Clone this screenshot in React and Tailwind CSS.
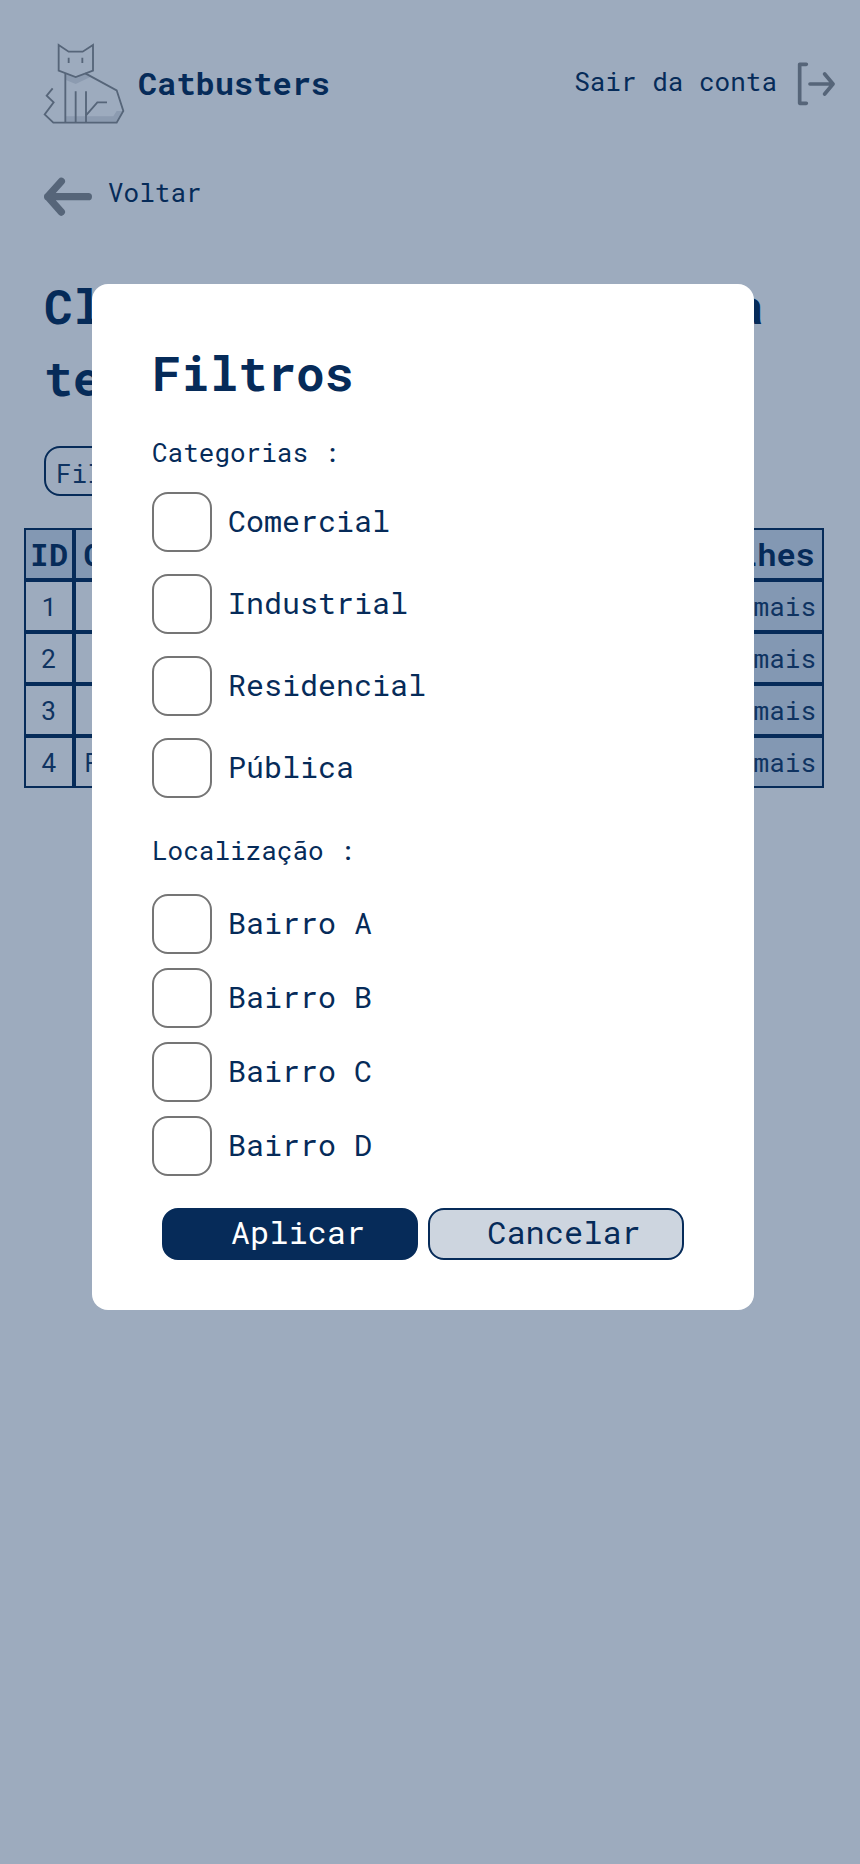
import React from "react";

const categories = ["Comercial", "Industrial", "Residencial", "Pública"];
const places = ["Bairro A", "Bairro B", "Bairro C", "Bairro D"];
const rows = [
  { id: 1, category: "Comercial", place: "Bairro A" },
  { id: 2, category: "Industrial", place: "Bairro B" },
  { id: 3, category: "Comercial", place: "Bairro C" },
  { id: 4, category: "Residencial", place: "Bairro D" },
];

function CatLogo() {
  return (
    <svg className="size-[82px] shrink-0" viewBox="36 36 246 246" fill="none" aria-hidden="true">
      <path d="M103 256H247L257 240H277L257 275H103Z" fill="#8c9bb0" />
      <path d="M103 128L134 138L165 128L178 138L134 159L103 146Z" fill="#8c9bb0" />
      <g stroke="#566579" strokeWidth="5.5">
        <path d="M83 42L113 62H155L186 42V119L134 138L83 119Z" />
        <path d="M113 80V96M154 80V96" />
        <path d="M103 127V275M134 181V275M165 181V275" />
        <path d="M165 253L199 214H228" />
        <path d="M163 127L257 178L277 240L257 275H67L41 250L68 214L47 194L65 172" />
      </g>
    </svg>
  );
}

function BackArrow() {
  return (
    <svg className="h-[39px] w-12 shrink-0" viewBox="42 439 144 117" fill="none" aria-hidden="true">
      <path
        d="M94 452L53 498L94 544M53 498H175"
        stroke="#566579"
        strokeWidth="22"
        strokeLinecap="round"
        strokeLinejoin="round"
      />
    </svg>
  );
}

function ExitIcon() {
  return (
    <svg className="h-11 w-[38px] shrink-0" viewBox="711 66 114 132" fill="none" aria-hidden="true">
      <g stroke="#566579" strokeWidth="11" strokeLinecap="round" strokeLinejoin="round">
        <path d="M739 73H719V190H739" />
        <path d="M750 132H819M794 102L819 132L794 162" />
      </g>
    </svg>
  );
}

function CheckList({ items, name, className }) {
  return (
    <ul className={`flex flex-col ${className}`}>
      {items.map((item) => (
        <li key={item}>
          <label className="flex items-center gap-4 text-[30px] leading-10">
            <input
              type="checkbox"
              name={name}
              className="size-15 shrink-0 appearance-none rounded-2xl border-2 border-[#757575] bg-white checked:bg-[#062b59]"
            />
            <span className="pb-0.5">{item}</span>
          </label>
        </li>
      ))}
    </ul>
  );
}

export default function App() {
  return (
    <div className="relative min-h-screen overflow-x-hidden bg-[#9dabbe] pb-10 font-['Roboto_Mono','Liberation_Mono',monospace] text-[#062b59]">
      <header className="flex items-center justify-between pt-[43px] pr-[25px] pl-[43px]">
        <div className="flex items-center gap-[13px]">
          <CatLogo />
          <span className="pb-0.5 text-[32px] leading-10 font-bold">Catbusters</span>
        </div>
        <a href="#sair" className="flex items-center gap-5 text-[26px] leading-[34px]">
          <span className="pb-1.5">Sair da conta</span>
          <ExitIcon />
        </a>
      </header>

      <main>
        <div className="px-11">
          <a href="#voltar" className="mt-[52px] flex w-fit items-start gap-4 text-[26px] leading-[30px]">
            <BackArrow />
            Voltar
          </a>
          <h1 className="mt-[54px] text-[48px] leading-[72px] font-bold">
            Clientes disponíveis para telefonema
          </h1>
          <button
            type="button"
            className="mt-8 block h-[50px] rounded-2xl border-2 border-[#062b59] px-2.5 pt-1 text-[26px] leading-[34px] text-[#0f3361]"
          >
            Filtros
          </button>
        </div>

        <div className="mt-8 pr-9 pl-6">
          <table className="w-full table-fixed border-separate border-spacing-0 text-center text-[26px] leading-[34px] text-[#0f3361]">
            <colgroup>
              <col className="w-[50px]" />
              <col className="w-[192px]" />
              <col />
              <col className="w-[172px]" />
            </colgroup>
            <thead className="bg-[#8398b3] text-[32px] text-[#062b59]">
              <tr className="h-13">
                <th className="border-2 border-[#062b59]">ID</th>
                <th className="border-2 border-[#062b59]">Categoria</th>
                <th className="border-2 border-[#062b59]">Localização</th>
                <th className="border-2 border-[#062b59]">Detalhes</th>
              </tr>
            </thead>
            <tbody>
              {rows.map((row) => (
                <tr key={row.id} className="h-13">
                  <td className="border-2 border-[#062b59]">{row.id}</td>
                  <td className="border-2 border-[#062b59]">{row.category}</td>
                  <td className="border-2 border-[#062b59]">{row.place}</td>
                  <td className="border-2 border-[#062b59] bg-[#8398b3]">
                    <a href={`#cliente-${row.id}`}>Saber mais</a>
                  </td>
                </tr>
              ))}
            </tbody>
          </table>
        </div>
      </main>

      <form
        role="dialog"
        aria-labelledby="filters-title"
        className="absolute top-[284px] right-[106px] left-[92px] rounded-2xl bg-white px-[60px] pt-[55px] pb-[50px]"
      >
        <h2 id="filters-title" className="text-[48px] leading-[68px] font-bold">
          Filtros
        </h2>
        <fieldset className="pt-7">
          <legend className="contents text-[26px] leading-[34px]">Categorias :</legend>
          <CheckList items={categories} name="categoria" className="mt-[23px] gap-[22px]" />
        </fieldset>
        <fieldset className="pt-[35px]">
          <legend className="contents text-[26px] leading-[34px]">Localização :</legend>
          <CheckList items={places} name="local" className="mt-[27px] gap-3.5" />
        </fieldset>
        <div className="mt-8 flex gap-2.5 px-2.5 text-[32px] leading-10">
          <button type="button" className="h-13 flex-1 rounded-2xl border-2 border-[#062b59] bg-[#062b59] pb-1 pl-4 text-white">
            Aplicar
          </button>
          <button type="button" className="h-13 flex-1 rounded-2xl border-2 border-[#062b59] bg-[#cdd5df] pb-1 pl-4">
            Cancelar
          </button>
        </div>
      </form>
    </div>
  );
}
